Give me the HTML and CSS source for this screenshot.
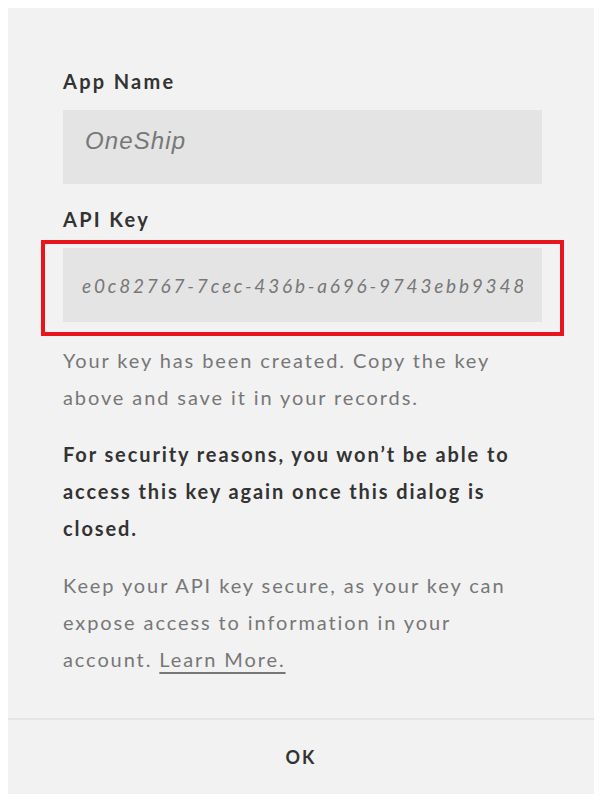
FILE: index.html
```html
<!DOCTYPE html>
<html lang="en">
<head>
  <meta charset="UTF-8" />
  <meta name="viewport" content="width=device-width, initial-scale=1" />
  <title>API Key</title>
  <link rel="stylesheet" href="styles.css">
</head>

<body>
  <div class="dialog">
    <div class="dialog-body">
      <!-- app name -->
      <label class="field-label" for="appName">App Name</label>
      <input class="field-input field-input--name" id="appName" type="text" value="OneShip" readonly />

      <!-- generated key -->
      <label class="field-label" for="apiKey">API Key</label>
      <div class="key-wrap">
        <input class="field-input field-input--key" id="apiKey" type="text" value="e0c82767-7cec-436b-a696-9743ebb9348c" readonly />
        <div class="highlight"></div>
      </div>

      <p class="note">Your key has been created. Copy the key above and save it in your records.</p>
      <p class="note note--strong">For security reasons, you won’t be able to access this key again once this dialog is closed.</p>
      <p class="note">Keep your API key secure, as your key can expose access to information in your account. <a href="#" class="learn-more">Learn More.</a></p>
    </div>

    <div class="dialog-footer">
      <button class="ok-btn">OK</button>
    </div>
  </div>
</body>
</html>
```

FILE: styles.css
```css
body {
  margin: 0;
  background: #fff;
  font-family: Lato, "Noto Sans", sans-serif;
  color: #333;
}

.dialog {
  margin: 8px 10px 10px 8px;
  height: 786px;
  background: #f2f2f2;
  display: flex;
  flex-direction: column;
}

.dialog-body {
  flex: 1;
  padding: 61px 52px 0 55px;
}

.field-label {
  display: block;
  font-size: 20px;
  font-weight: 700;
  line-height: 24px;
  letter-spacing: 2.3px;
  color: #333;
  margin-bottom: 17px;
}

.field-input {
  display: block;
  width: 100%;
  height: 74px;
  box-sizing: border-box;
  margin: 0;
  border: none;
  outline: none;
  background: #e4e4e4;
  color: #777;
  font-style: italic;
}

.field-input--name {
  font-family: "Liberation Sans", Arial, sans-serif;
  font-size: 24px;
  letter-spacing: 1.1px;
  padding: 0 22px 12px;
  margin-bottom: 23px;
}

.field-input--key {
  font-family: Lato, "Noto Sans", sans-serif;
  font-size: 19px;
  letter-spacing: 2.8px;
  padding: 0 19px;
}

/* red annotation box around the key */
.key-wrap {
  position: relative;
}

.highlight {
  position: absolute;
  top: -8px;
  left: -22px;
  right: -22px;
  bottom: -14px;
  border: 4px solid #e8161b;
  pointer-events: none;
}

.note {
  margin: 20px 0 0;
  font-size: 20px;
  line-height: 37px;
  letter-spacing: 1.9px;
  color: #777;
}

.note--strong {
  color: #333;
  font-weight: 700;
}

.learn-more {
  color: inherit;
  text-decoration: underline;
  text-decoration-thickness: 1.5px;
  text-underline-offset: 5px;
}

.dialog-footer {
  height: 76px;
  box-sizing: border-box;
  border-top: 2px solid #e5e5e5;
  display: flex;
  align-items: center;
  justify-content: center;
}

.ok-btn {
  background: none;
  border: none;
  padding: 0;
  font-family: Lato, "Noto Sans", sans-serif;
  font-size: 18px;
  font-weight: 700;
  line-height: 22px;
  letter-spacing: 2px;
  color: #333;
  cursor: pointer;
}
```
